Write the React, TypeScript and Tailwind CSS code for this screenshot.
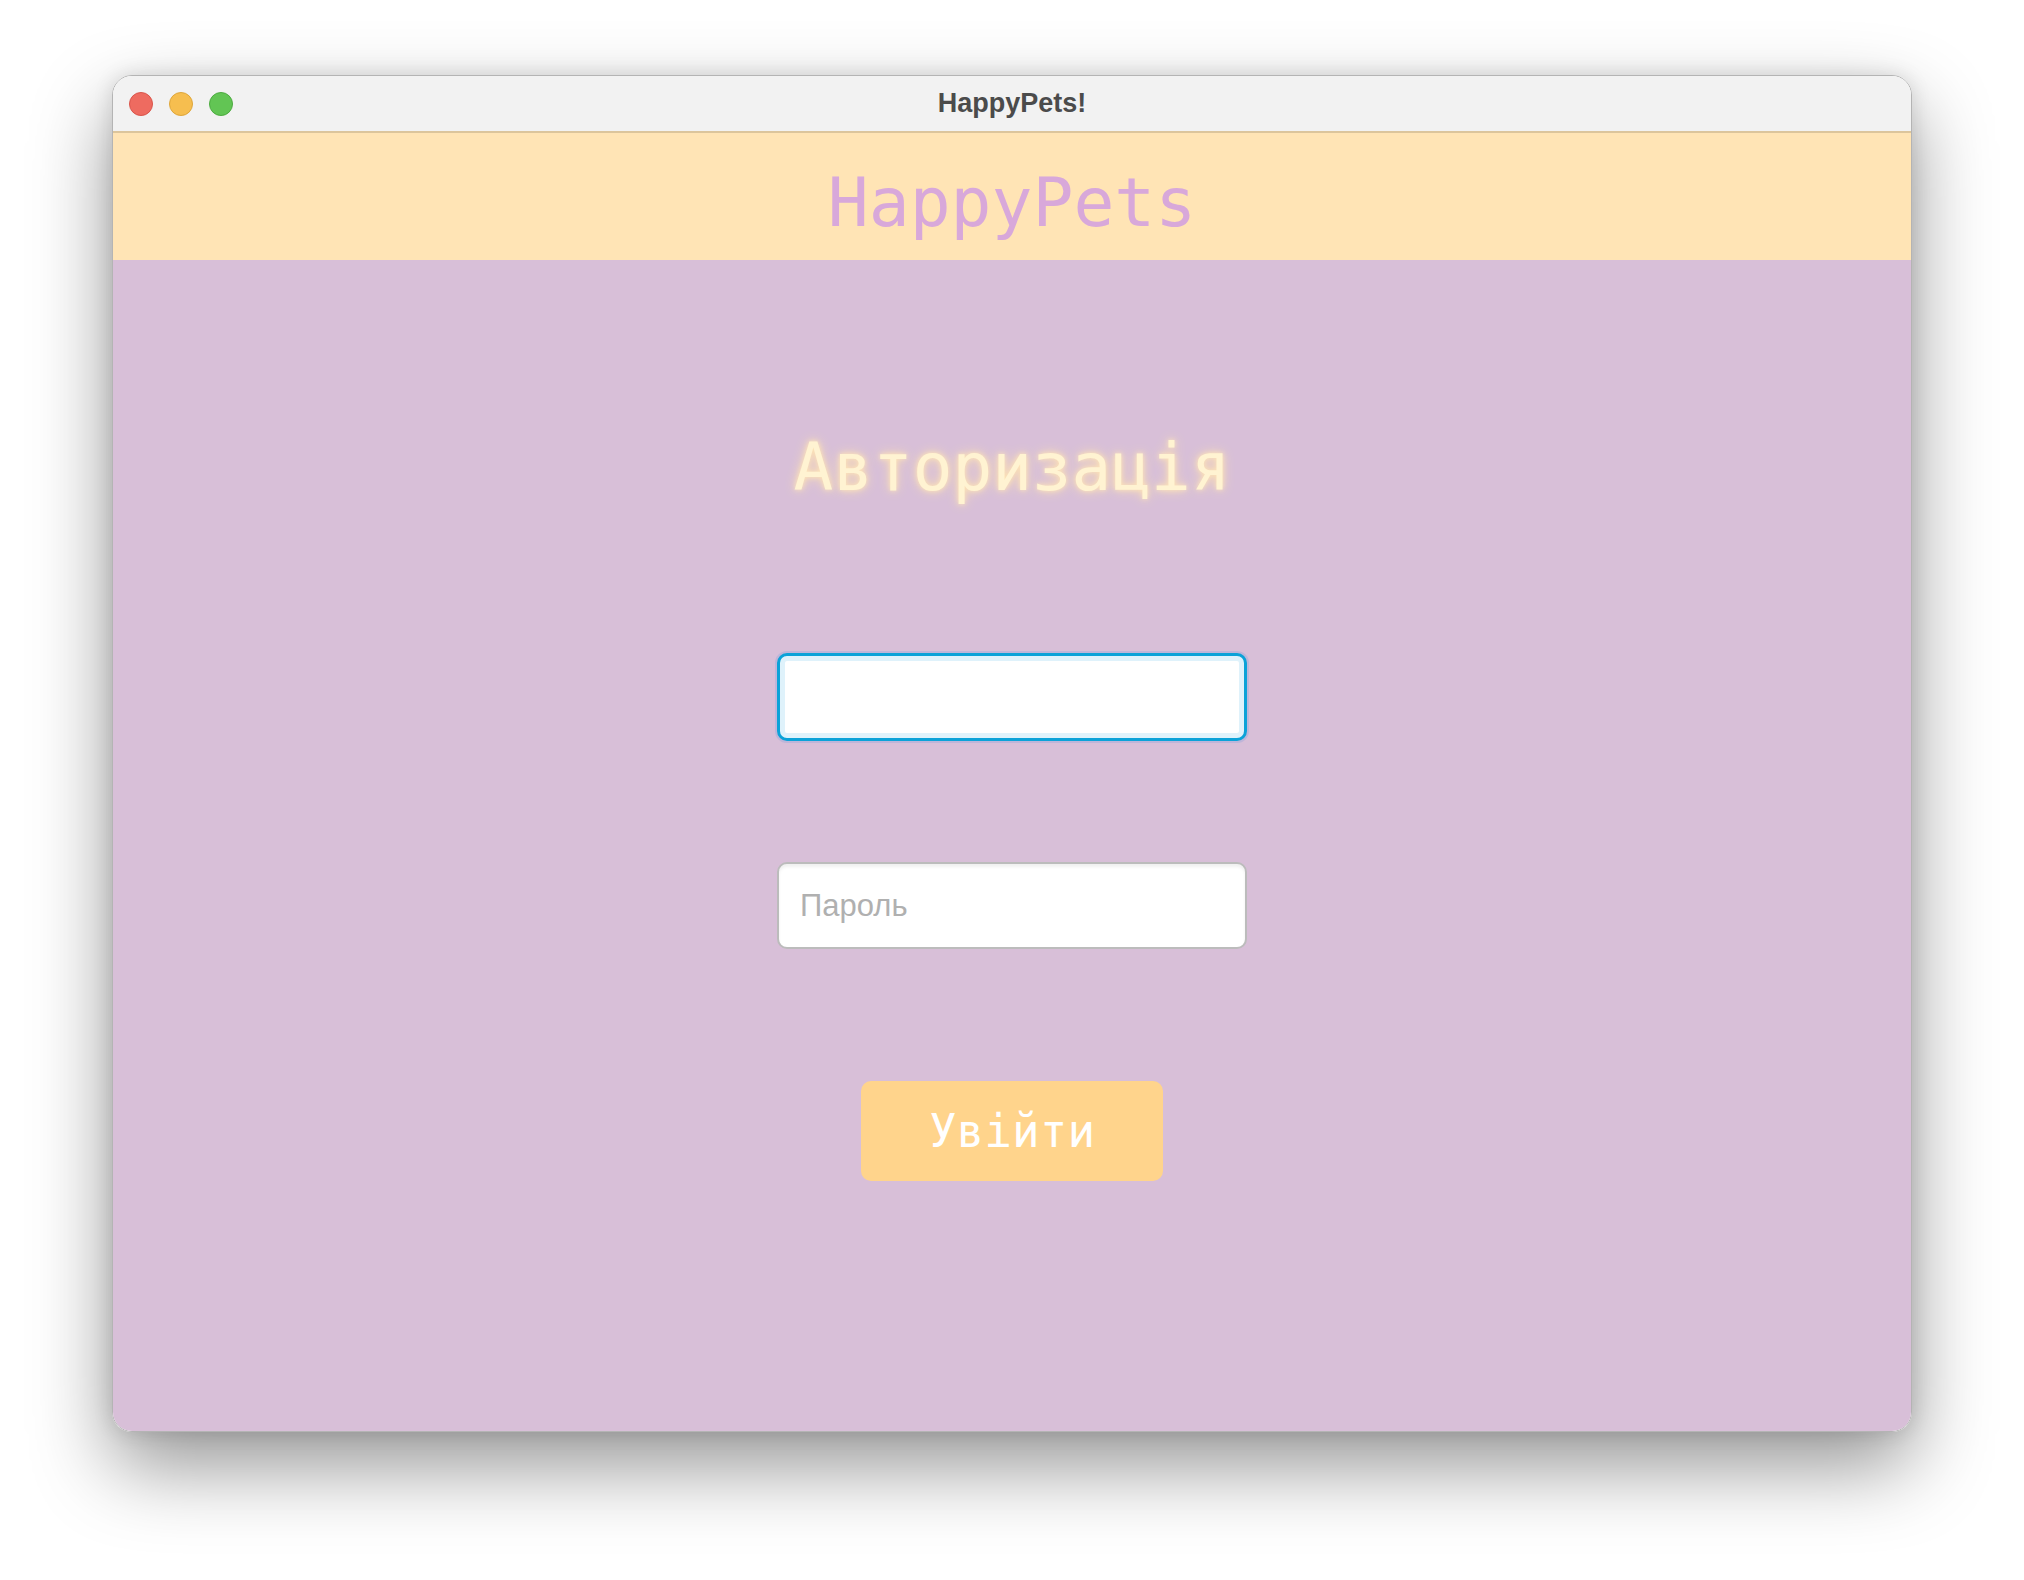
import { useState } from 'react'

const mono = { fontFamily: '"DejaVu Sans Mono", monospace' }

export default function App() {
  const [login, setLogin] = useState('')
  const [password, setPassword] = useState('')

  return (
    <div className="w-[2024px] h-[1580px] bg-white pl-[112px] pt-[75px]">
      <div className="w-[1800px] h-[1357px] rounded-[20px] overflow-hidden flex flex-col border border-[#b4b4b4] shadow-[0_34px_80px_rgba(0,0,0,0.42),0_0_20px_rgba(0,0,0,0.12)]">
        {/* Title bar */}
        <div className="h-[57px] shrink-0 bg-[#f2f2f2] border-b-2 border-[#dcc59c] flex items-center relative">
          <div className="flex items-center gap-[16px] pl-[16px]">
            <span className="w-[24px] h-[24px] rounded-full bg-[#ee6b60] border border-[#d9554b]" />
            <span className="w-[24px] h-[24px] rounded-full bg-[#f6be4f] border border-[#dea63b]" />
            <span className="w-[24px] h-[24px] rounded-full bg-[#62c554] border border-[#4dab40]" />
          </div>
          <div
            className="absolute inset-0 flex items-center justify-center text-[27px] font-bold text-[#4b4b4b]"
            style={{ fontFamily: '"Liberation Sans", Arial, sans-serif' }}
          >
            HappyPets!
          </div>
        </div>

        {/* Header */}
        <div className="h-[127px] shrink-0 bg-[#ffe4b5] flex justify-center pt-[36px]">
          <div className="text-[68px] leading-none text-[#d8a8da]" style={mono}>
            HappyPets
          </div>
        </div>

        {/* Content */}
        <div className="flex-1 bg-[#d8bfd8] flex flex-col items-center">
          <h1
            className="mt-[175px] text-[66px] leading-none text-[#fff3d2] [text-shadow:0_0_12px_#ffe2ad,0_0_5px_#ffe9c0]"
            style={mono}
          >
            Авторизація
          </h1>

          <input
            value={login}
            onChange={e => setLogin(e.target.value)}
            className="mt-[152px] w-[470px] h-[88px] bg-white rounded-[10px] border-[3px] border-[#0ba2d8] px-[20px] text-[31px] outline-none shadow-[inset_0_0_0_5px_#dff2fb,0_0_0_2px_rgba(130,160,220,0.3)]"
            style={{ fontFamily: '"Liberation Sans", Arial, sans-serif' }}
          />

          <input
            type="password"
            value={password}
            onChange={e => setPassword(e.target.value)}
            placeholder="Пароль"
            className="mt-[121px] w-[470px] h-[87px] bg-white rounded-[10px] border-2 border-[#bcbcbc] px-[21px] text-[31px] text-[#333] placeholder:text-[#b0b0b0] outline-none shadow-[inset_0_3px_3px_rgba(0,0,0,0.06)]"
            style={{ fontFamily: '"Liberation Sans", Arial, sans-serif' }}
          />

          <button
            type="button"
            className="mt-[132px] w-[302px] h-[100px] rounded-[10px] bg-[#ffd48c] text-white text-[46px] leading-none"
            style={mono}
          >
            Увійти
          </button>
        </div>
      </div>
    </div>
  )
}
